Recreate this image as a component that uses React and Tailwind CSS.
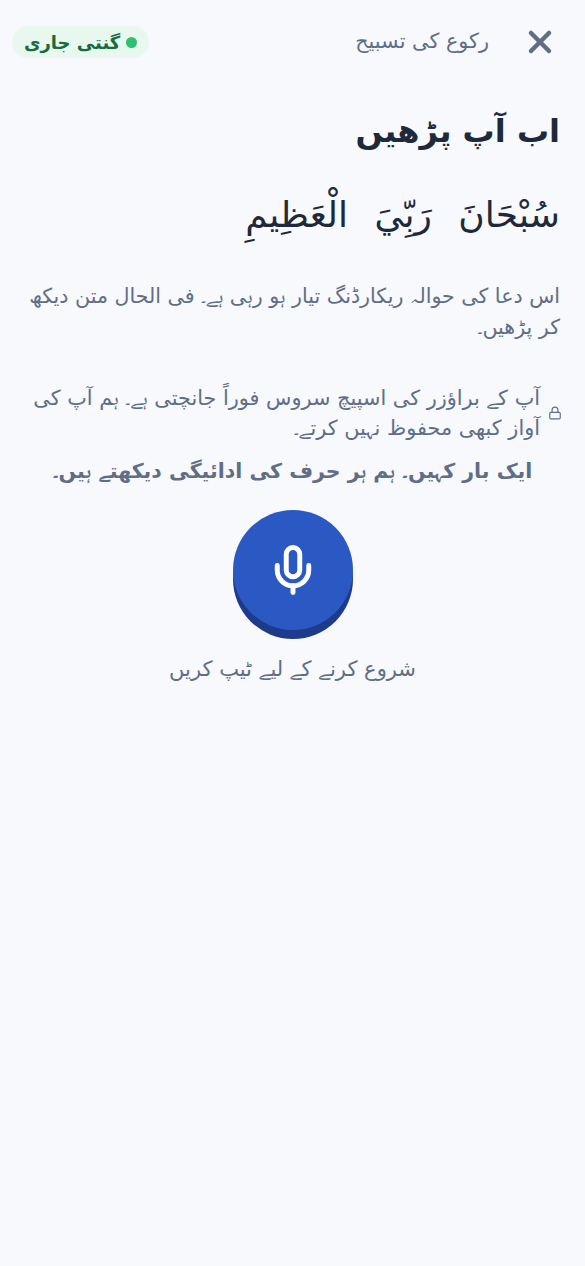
import { Lock, Mic, X } from "lucide-react";

export default function App() {
  return (
    <div dir="rtl" lang="ur" className="min-h-[1266px] bg-[#f7f9fc] font-['DejaVu_Sans','Noto_Naskh_Arabic',sans-serif] text-[#1e293b]">
      <header className="flex items-center justify-between pr-[27px] pl-3 pt-[24px]">
        <div className="flex items-center gap-[33px]">
          <X size={36} strokeWidth={3} className="text-[#616d87]" />
          <span className="text-[20.8px] text-[#616d87]">رکوع کی تسبیح</span>
        </div>
        <div className="flex h-8 items-center gap-1.5 rounded-full bg-[#e8f8ee] px-3 text-[18px] font-bold text-[#176b3c]">
          <span className="h-[11px] w-[11px] rounded-full bg-[#2fbf71]" />
          گنتی جاری
        </div>
      </header>

      <main className="px-[25px] pt-[47px]">
        <h1 className="text-[32px] font-bold leading-[48px]">اب آپ پڑھیں</h1>
        <p className="mt-[33px] text-[36px] leading-[54px] [word-spacing:15px]">سُبْحَانَ رَبِّيَ الْعَظِيمِ</p>
        <p className="mt-[39px] text-[20.6px] leading-[31px] text-[#616d87]">
          اس دعا کی حوالہ ریکارڈنگ تیار ہو رہی ہے۔ فی الحال متن دیکھ کر پڑھیں۔
        </p>

        <div className="mt-[40px] flex items-center gap-2 text-[20.8px] leading-[30px] text-[#616d87]">
          <Lock size={14} className="-mr-[2px] shrink-0" />
          <p>آپ کے براؤزر کی اسپیچ سروس فوراً جانچتی ہے۔ ہم آپ کی آواز کبھی محفوظ نہیں کرتے۔</p>
        </div>
        <p className="mt-[13px] text-center text-[20.5px] font-bold leading-[30px] text-[#616d87]">
          ایک بار کہیں۔ ہم ہر حرف کی ادائیگی دیکھتے ہیں۔
        </p>

        <div className="mt-[24px] flex flex-col items-center">
          <button className="flex h-[120px] w-[120px] items-center justify-center rounded-full bg-[#2b59c3] text-white shadow-[0_9px_0_#1e3a8a]">
            <Mic size={54} strokeWidth={2.2} />
          </button>
          <p className="mt-[24px] text-[21px] leading-[30px] text-[#616d87]">شروع کرنے کے لیے ٹیپ کریں</p>
        </div>
      </main>
    </div>
  );
}
